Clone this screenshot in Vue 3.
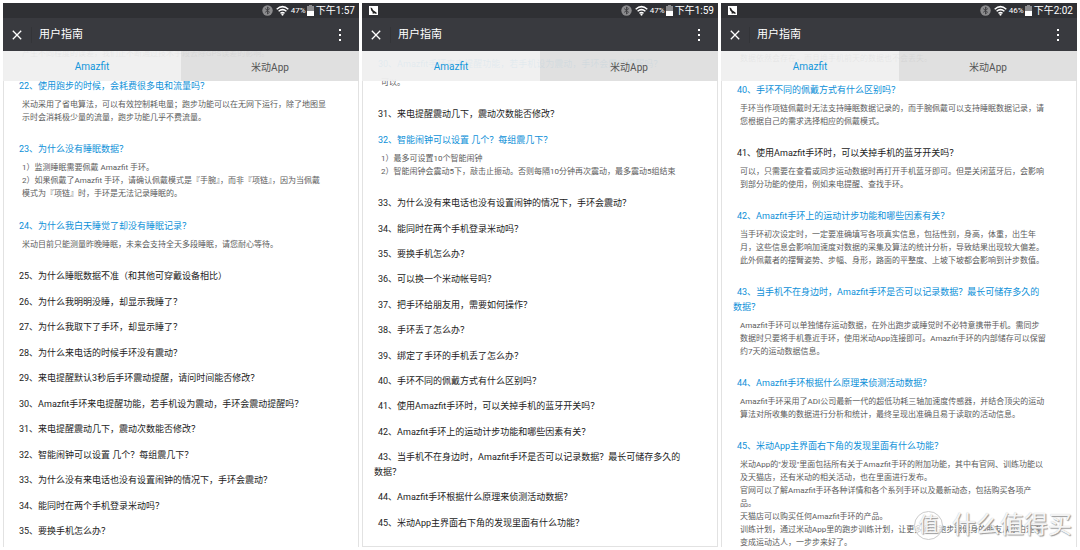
<script setup>
const list = (...titles) => titles.map((t) => ({ q: [t] }))

const screens = [
  {
    id: 'a',
    time: '下午1:57',
    battery: '47%',
    notice: false,
    end: false,
    scroll: 4,
    items: [
      { a: ['产生不同程度的误差，我们正不断通过技术手段去除GPS误差的影响。'] },
      {
        q: ['22、使用跑步的时候，会耗费很多电和流量吗？'],
        open: true,
        a: ['米动采用了省电算法，可以有效控制耗电量；跑步功能可以在无网下运行，除了地图显', '示时会消耗极少量的流量，跑步功能几乎不费流量。'],
      },
      {
        q: ['23、为什么没有睡眠数据？'],
        open: true,
        a: ['1）监测睡眠需要佩戴 Amazfit 手环。', '2）如果佩戴了Amazfit 手环，请确认佩戴模式是『手腕』，而非『项链』，因为当佩戴', '模式为『项链』时，手环是无法记录睡眠的。'],
      },
      {
        q: ['24、为什么我白天睡觉了却没有睡眠记录？'],
        open: true,
        a: ['米动目前只能测量昨晚睡眠，未来会支持全天多段睡眠，请您耐心等待。'],
      },
      ...list(
        '25、为什么睡眠数据不准（和其他可穿戴设备相比）',
        '26、为什么我明明没睡，却显示我睡了？',
        '27、为什么我取下了手环，却显示睡了？',
        '28、为什么来电话的时候手环没有震动？',
        '29、来电提醒默认3秒后手环震动提醒，请问时间能否修改？',
        '30、Amazfit手环来电提醒功能，若手机设为震动，手环会震动提醒吗？',
        '31、来电提醒震动几下，震动次数能否修改？',
        '32、智能闹钟可以设置 几个？每组震几下？',
        '33、为什么没有来电话也没有设置闹钟的情况下，手环会震动？',
        '34、能同时在两个手机登录米动吗？',
        '35、要换手机怎么办？'
      ),
    ],
  },
  {
    id: 'b',
    time: '下午1:59',
    battery: '47%',
    notice: true,
    end: true,
    scroll: -6,
    items: [
      {
        q: ['30、Amazfit手环来电提醒功能，若手机设为震动，手环会震动提醒吗？'],
        open: true,
        a: ['可以。'],
      },
      { q: ['31、来电提醒震动几下，震动次数能否修改？'] },
      {
        q: ['32、智能闹钟可以设置 几个？每组震几下？'],
        open: true,
        a: ['1）最多可设置10个智能闹钟', '2）智能闹钟会震动5下，敲击止振动。否则每隔10分钟再次震动，最多震动5组结束'],
      },
      ...list(
        '33、为什么没有来电话也没有设置闹钟的情况下，手环会震动？',
        '34、能同时在两个手机登录米动吗？',
        '35、要换手机怎么办？',
        '36、可以换一个米动帐号吗？',
        '37、把手环给朋友用，需要如何操作？',
        '38、手环丢了怎么办？',
        '39、绑定了手环的手机丢了怎么办？',
        '40、手环不同的佩戴方式有什么区别吗？',
        '41、使用Amazfit手环时，可以关掉手机的蓝牙开关吗？',
        '42、Amazfit手环上的运动计步功能和哪些因素有关？'
      ),
      { q: ['43、当手机不在身边时，Amazfit手环是否可以记录数据？最长可储存多久的', '数据？'] },
      ...list('44、Amazfit手环根据什么原理来侦测活动数据？', '45、米动App主界面右下角的发现里面有什么功能？'),
    ],
  },
  {
    id: 'c',
    time: '下午2:02',
    battery: '46%',
    notice: true,
    end: false,
    scroll: -1,
    items: [
      { a: ['数据依然会存在，而且换手机前天的数据也不会丢失。'] },
      {
        q: ['40、手环不同的佩戴方式有什么区别吗？'],
        open: true,
        a: ['手环当作项链佩戴时无法支持睡眠数据记录的，而手腕佩戴可以支持睡眠数据记录，请', '您根据自己的需求选择相应的佩戴模式。'],
      },
      {
        q: ['41、使用Amazfit手环时，可以关掉手机的蓝牙开关吗？'],
        a: ['可以，只需要在查看或同步运动数据时再打开手机蓝牙即可。但是关闭蓝牙后，会影响', '到部分功能的使用，例如来电提醒、查找手环。'],
      },
      {
        q: ['42、Amazfit手环上的运动计步功能和哪些因素有关？'],
        open: true,
        a: ['当手环初次设定时，一定要准确填写各项真实信息，包括性别，身高，体重，出生年', '月，这些信息会影响加速度对数据的采集及算法的统计分析，导致结果出现较大偏差。', '此外佩戴者的摆臂姿势、步幅、身形，路面的平整度、上坡下坡都会影响到计步数值。'],
      },
      {
        q: ['43、当手机不在身边时，Amazfit手环是否可以记录数据？最长可储存多久的', '数据？'],
        open: true,
        a: ['Amazfit手环可以单独储存运动数据，在外出跑步或睡觉时不必特意携带手机。需同步', '数据时只要将手机靠近手环，使用米动App连接即可。Amazfit手环的内部储存可以保留', '约7天的运动数据信息。'],
      },
      {
        q: ['44、Amazfit手环根据什么原理来侦测活动数据？'],
        open: true,
        a: ['Amazfit手环采用了ADI公司最新一代的超低功耗三轴加速度传感器，并结合顶尖的运动', '算法对所收集的数据进行分析和统计，最终呈现出准确且易于读取的活动信息。'],
      },
      {
        q: ['45、米动App主界面右下角的发现里面有什么功能？'],
        open: true,
        a: ['米动App的"发现"里面包括所有关于Amazfit手环的附加功能，其中有官网、训练功能以', '及天猫店，还有米动的相关活动，也在里面进行发布。', '官网可以了解Amazfit手环各种详情和各个系列手环以及最新动态，包括购买各项产', '品。', '天猫店可以购买任何Amazfit手环的产品。', '训练计划，通过米动App里的跑步训练计划，让更多通过跑步跟健身的朋友从小白逐渐', '变成运动达人，一步步来好了。'],
      },
    ],
  },
]
</script>

<template>
  <main class="page">
    <section v-for="s in screens" :key="s.id" class="phone">
      <div class="status">
        <svg v-if="s.notice" class="notice" viewBox="0 0 9 9" aria-hidden="true">
          <rect width="9" height="9" fill="#fff" />
          <path d="M1.5 1.5 3 2l1.2 2.2L7.5 6.5V8L5 7.2 3.8 8 3.6 6 2.2 4.5z" fill="#222" />
        </svg>
        <span class="spacer"></span>
        <svg class="bt" viewBox="0 0 11 11" aria-hidden="true">
          <circle cx="5.5" cy="5.5" r="5.2" fill="#8b8b8d" />
          <path d="M3.2 3.6 7.5 7.2 5.5 9V2l2 1.8-4.3 3.6" fill="none" stroke="#3c3c3f" stroke-width=".9" />
        </svg>
        <svg class="wifi" viewBox="0 0 13 11" aria-hidden="true">
          <g fill="none" stroke="#fff" stroke-width="1.5">
            <path d="M.7 4.2Q6.5-.9 12.3 4.2" />
            <path d="M2.6 6.3Q6.5 3 10.4 6.3" />
            <path d="M4.5 8.3Q6.5 6.7 8.5 8.3" />
          </g>
          <circle cx="6.5" cy="9.6" r="1.1" fill="#fff" />
        </svg>
        <span class="pct">{{ s.battery }}</span>
        <svg class="batt" viewBox="0 0 7 11" aria-hidden="true">
          <path d="M2 0h3v1h2v10H0V1h2z" fill="#8b8b8d" />
          <path d="M0 6h7v5H0z" fill="#fff" />
        </svg>
        <span class="time">{{ s.time }}</span>
      </div>

      <header class="bar">
        <button class="icon close" aria-label="关闭">
          <svg viewBox="0 0 10 10"><path d="M.8.8l8.4 8.4M9.2.8.8 9.2" stroke="#fff" stroke-width="1.3" /></svg>
        </button>
        <h1 class="title">用户指南</h1>
        <button class="icon more" aria-label="更多">
          <svg viewBox="0 0 4 12"><path d="M1 0h2v2H1zM1 5h2v2H1zM1 10h2v2H1z" fill="#fff" /></svg>
        </button>
      </header>

      <div class="view">
        <div class="content" :class="{ end: s.end }" :style="{ marginTop: -s.scroll + 'px' }">
          <article v-for="(it, i) in s.items" :key="i" class="item">
            <h2 v-if="it.q" class="q">
              <button class="toggle" :class="{ open: it.open }">
                <span v-for="(line, n) in it.q" :key="n" class="line">{{ line }}</span>
              </button>
            </h2>
            <p v-if="it.a" class="a">
              <span v-for="(line, n) in it.a" :key="n" class="line">{{ line }}</span>
            </p>
          </article>
        </div>
        <nav class="tabs">
          <button class="tab on">Amazfit</button>
          <button class="tab">米动App</button>
        </nav>
      </div>
    </section>

    <div class="mark">
      <span class="seal">值</span>
      <span class="words">什么值得买</span>
    </div>
  </main>
</template>

<style>
body {
  margin: 0;
  background: #fff;
}
</style>

<style scoped>
.page {
  position: relative;
  box-sizing: border-box;
  height: 100vh;
  padding: 3px;
  display: grid;
  grid-template-columns: repeat(3, 1fr);
  gap: 3px;
  overflow: hidden;
  font-family: Roboto, "Noto Sans CJK SC", sans-serif;
}
button {
  font: inherit;
  color: inherit;
  background: none;
  border: 0;
  padding: 0;
  cursor: pointer;
}
svg {
  display: block;
}
.phone {
  display: flex;
  flex-direction: column;
  min-width: 0;
  min-height: 0;
}
.status {
  display: flex;
  align-items: center;
  flex: none;
  height: 15px;
  padding: 0 4px 0 7px;
  background: #2f3034;
  color: #fff;
}
.notice {
  width: 9px;
  height: 9px;
}
.spacer {
  flex: 1;
}
.bt {
  width: 11px;
  height: 11px;
  margin-right: 3px;
}
.wifi {
  width: 13px;
  height: 11px;
  margin-right: 2px;
}
.pct {
  font-size: 8px;
  margin-right: 1px;
}
.batt {
  width: 7px;
  height: 11px;
  margin-right: 2px;
}
.time {
  font-size: 10px;
  line-height: 15px;
}
.bar {
  display: flex;
  align-items: center;
  flex: none;
  height: 33px;
  padding: 0 17px 0 9px;
  background: #393a3f;
  color: #fff;
}
.close {
  width: 20px;
  height: 16px;
  border-right: 1px solid #333438;
}
.close svg {
  width: 10px;
  height: 10px;
}
.title {
  flex: 1;
  margin: 0;
  padding-left: 7px;
  font-size: 11px;
  font-weight: 400;
  line-height: 16px;
}
.more svg {
  width: 4px;
  height: 12px;
}
.view {
  position: relative;
  flex: 1;
  min-height: 0;
  display: flex;
  flex-direction: column;
  overflow: hidden;
}
.content {
  flex: 1;
  min-height: 0;
  display: flex;
  flex-direction: column;
  justify-content: space-between;
  gap: 10px;
  padding: 0 0 8px 11px;
  border: solid #e2e2e2;
  border-width: 0 1px;
}
.content.end {
  padding-bottom: 15px;
  border-bottom-width: 1px;
}
.item {
  flex: none;
}
.q {
  margin: 0;
  font-size: 9px;
  font-weight: 400;
  line-height: 15px;
  color: #222;
}
.toggle {
  display: block;
  text-align: left;
}
.toggle .line:first-child {
  padding-left: 4px;
}
.toggle.open {
  color: #0d90d8;
}
.line {
  display: block;
  white-space: nowrap;
}
.a {
  margin: 0;
  padding: 4px 0 8px 7px;
  font-size: 8px;
  line-height: 13px;
  color: #5c5c5c;
}
.item:first-child .a:first-child {
  padding-top: 0;
}
.tabs {
  position: absolute;
  inset: 0 0 auto 0;
  display: flex;
  height: 30px;
}
.tab {
  flex: 1;
  font-size: 10px;
  color: #555;
  background: rgba(222, 222, 222, 0.94);
}
.tab.on {
  color: #1296db;
  background: rgba(239, 239, 239, 0.94);
}
.mark {
  position: absolute;
  right: 8px;
  bottom: 9px;
  display: flex;
  align-items: center;
  gap: 9px;
  color: rgba(255, 255, 255, 0.9);
  text-shadow: 1px 1px 1px #999, 0 0 1px #bbb;
  pointer-events: none;
}
.seal {
  box-sizing: border-box;
  width: 29px;
  height: 29px;
  border: 1px solid #ccc;
  border-radius: 50%;
  background: rgba(255, 255, 255, 0.7);
  font-size: 20px;
  line-height: 26px;
  text-align: center;
}
.words {
  font-size: 24px;
  line-height: 32px;
}
</style>
